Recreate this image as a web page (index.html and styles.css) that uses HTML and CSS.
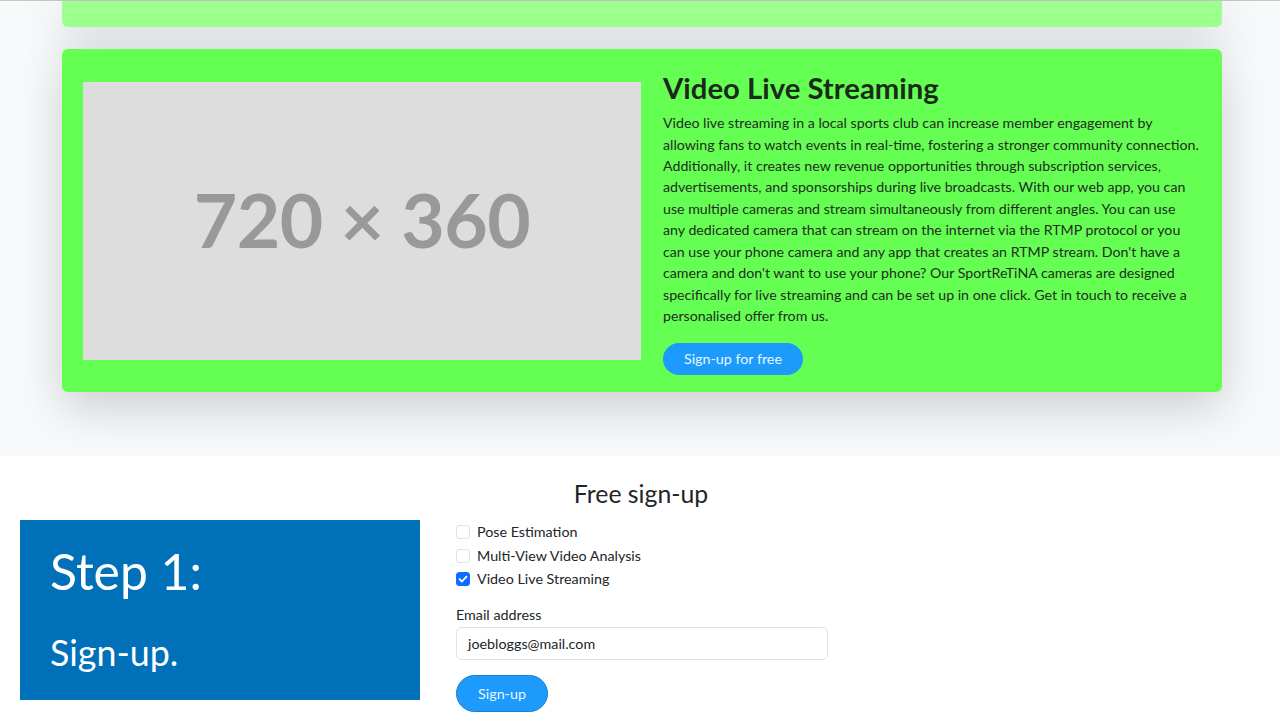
FILE: index.html
```html
<!DOCTYPE html>
<html lang="en">
<head>
<meta charset="utf-8">
<title>Video Live Streaming</title>
<link rel="stylesheet" href="styles.css">
</head>
<body>
<section class="features">
  <div class="card card-light"></div>
  <div class="card card-main">
    <div class="media">
      <div class="placeholder">720 × 360</div>
    </div>
    <div class="info">
      <h3 class="info-title">Video Live Streaming</h3>
      <p class="info-text">Video live streaming in a local sports club can increase member engagement by allowing fans to watch events in real-time, fostering a stronger community connection. Additionally, it creates new revenue opportunities through subscription services, advertisements, and sponsorships during live broadcasts. With our web app, you can use multiple cameras and stream simultaneously from different angles. You can use any dedicated camera that can stream on the internet via the RTMP protocol or you can use your phone camera and any app that creates an RTMP stream. Don't have a camera and don't want to use your phone? Our SportReTiNA cameras are designed specifically for live streaming and can be set up in one click. Get in touch to receive a personalised offer from us.</p>
      <a class="btn btn-pill" href="#">Sign-up for free</a>
    </div>
  </div>
</section>
<section class="signup">
  <h4 class="signup-title">Free sign-up</h4>
  <div class="signup-row">
    <div class="step">
      <div class="step-num">Step 1:</div>
      <div class="step-label">Sign-up.</div>
    </div>
    <form class="form">
      <label class="check"><span class="box"></span>Pose Estimation</label>
      <label class="check"><span class="box"></span>Multi-View Video Analysis</label>
      <label class="check"><span class="box checked"><svg viewBox="0 0 14 14" width="14" height="14"><path d="M3.6 7.2l2.3 2.3 4.6-4.8" fill="none" stroke="#fff" stroke-width="1.8" stroke-linecap="round" stroke-linejoin="round"/></svg></span>Video Live Streaming</label>
      <label class="field-label">Email address</label>
      <div class="input">joebloggs@mail.com</div>
      <button type="button" class="btn-submit">Sign-up</button>
    </form>
  </div>
</section>
</body>
</html>
```
FILE: styles.css
```css
* { box-sizing: border-box; }
html, body { margin: 0; padding: 0; }
body {
  font-family: Lato, "Noto Sans", sans-serif;
  color: #212529;
  background: #fff;
  width: 1280px;
  height: 720px;
  overflow: hidden;
}
.features {
  background: #f8f9fa;
  border-top: 1px solid #c4c9c4;
  padding: 0 58px 64px 62px;
  display: flex;
  flex-direction: column;
  gap: 22px;
}
.card {
  border-radius: 6px;
  box-shadow: 0 16px 48px rgba(0,0,0,0.175);
}
.card-light {
  height: 26px;
  background: #9cff8e;
  border-radius: 0 0 6px 6px;
}
.card-main {
  background: #65ff53;
  display: grid;
  grid-template-columns: 559px 1fr;
  align-items: center;
  padding: 18px 22px 17px 21px;
}
.media { display: flex; }
.placeholder {
  width: 558px;
  height: 278px;
  background: #dddddd;
  color: #999;
  font-weight: 700;
  font-size: 75px;
  display: flex;
  align-items: center;
  justify-content: center;
  letter-spacing: -0.5px;
  padding-bottom: 4px;
}
.info { padding-left: 21px; }
.info-title {
  font-size: 29.3px;
  font-weight: 700;
  line-height: 1.2;
  margin: 3px 0 7px;
  color: #1a2a1a;
}
.info-text {
  font-size: 14.2px;
  line-height: 21.44px;
  margin: 0 0 16px;
  color: #1f2d1f;
}
.btn-pill {
  display: inline-block;
  background: #1d9bfd;
  color: #eaf6ff;
  text-decoration: none;
  font-size: 14.3px;
  line-height: 32px;
  height: 32px;
  padding: 0 21px;
  border-radius: 16px;
}
.signup {
  padding-top: 23px;
}
.signup-title {
  text-align: center;
  font-size: 24.8px;
  font-weight: 400;
  line-height: 1.2;
  margin: 0 0 12px 2px;
}
.signup-row {
  display: grid;
  grid-template-columns: 436px 372px;
  padding-left: 20px;
}
.step {
  width: 400px;
  height: 180px;
  background: #0070b8;
  color: #fff;
  padding: 22px 30px 0;
}
.step-num {
  font-size: 49.8px;
  line-height: 1.2;
  margin-bottom: 30px;
}
.step-label {
  font-size: 35.8px;
  line-height: 1.2;
}
.form {
  display: flex;
  flex-direction: column;
  align-items: flex-start;
  font-size: 14.3px;
  line-height: 1.5;
}
.check {
  display: flex;
  align-items: center;
  gap: 7px;
  height: 23.5px;
}
.box {
  width: 14px;
  height: 14px;
  border: 1px solid #dee2e6;
  border-radius: 3px;
  background: #fff;
  display: flex;
}
.box.checked {
  background: #0d6efd;
  border-color: #0d6efd;
}
.box.checked svg { margin: -1px; }
.field-label {
  margin-top: 13px;
  margin-bottom: 2px;
}
.input {
  width: 372px;
  height: 33px;
  border: 1px solid #dee2e6;
  border-radius: 6px;
  padding: 0 11px;
  line-height: 31px;
}
.btn-submit {
  margin-top: 15px;
  font-family: inherit;
  font-size: 14.3px;
  color: #eaf6ff;
  background: #1d9bfd;
  border: 1px solid #1a7fd0;
  height: 37px;
  width: 92px;
  border-radius: 19px;
  padding: 0;
}
```
